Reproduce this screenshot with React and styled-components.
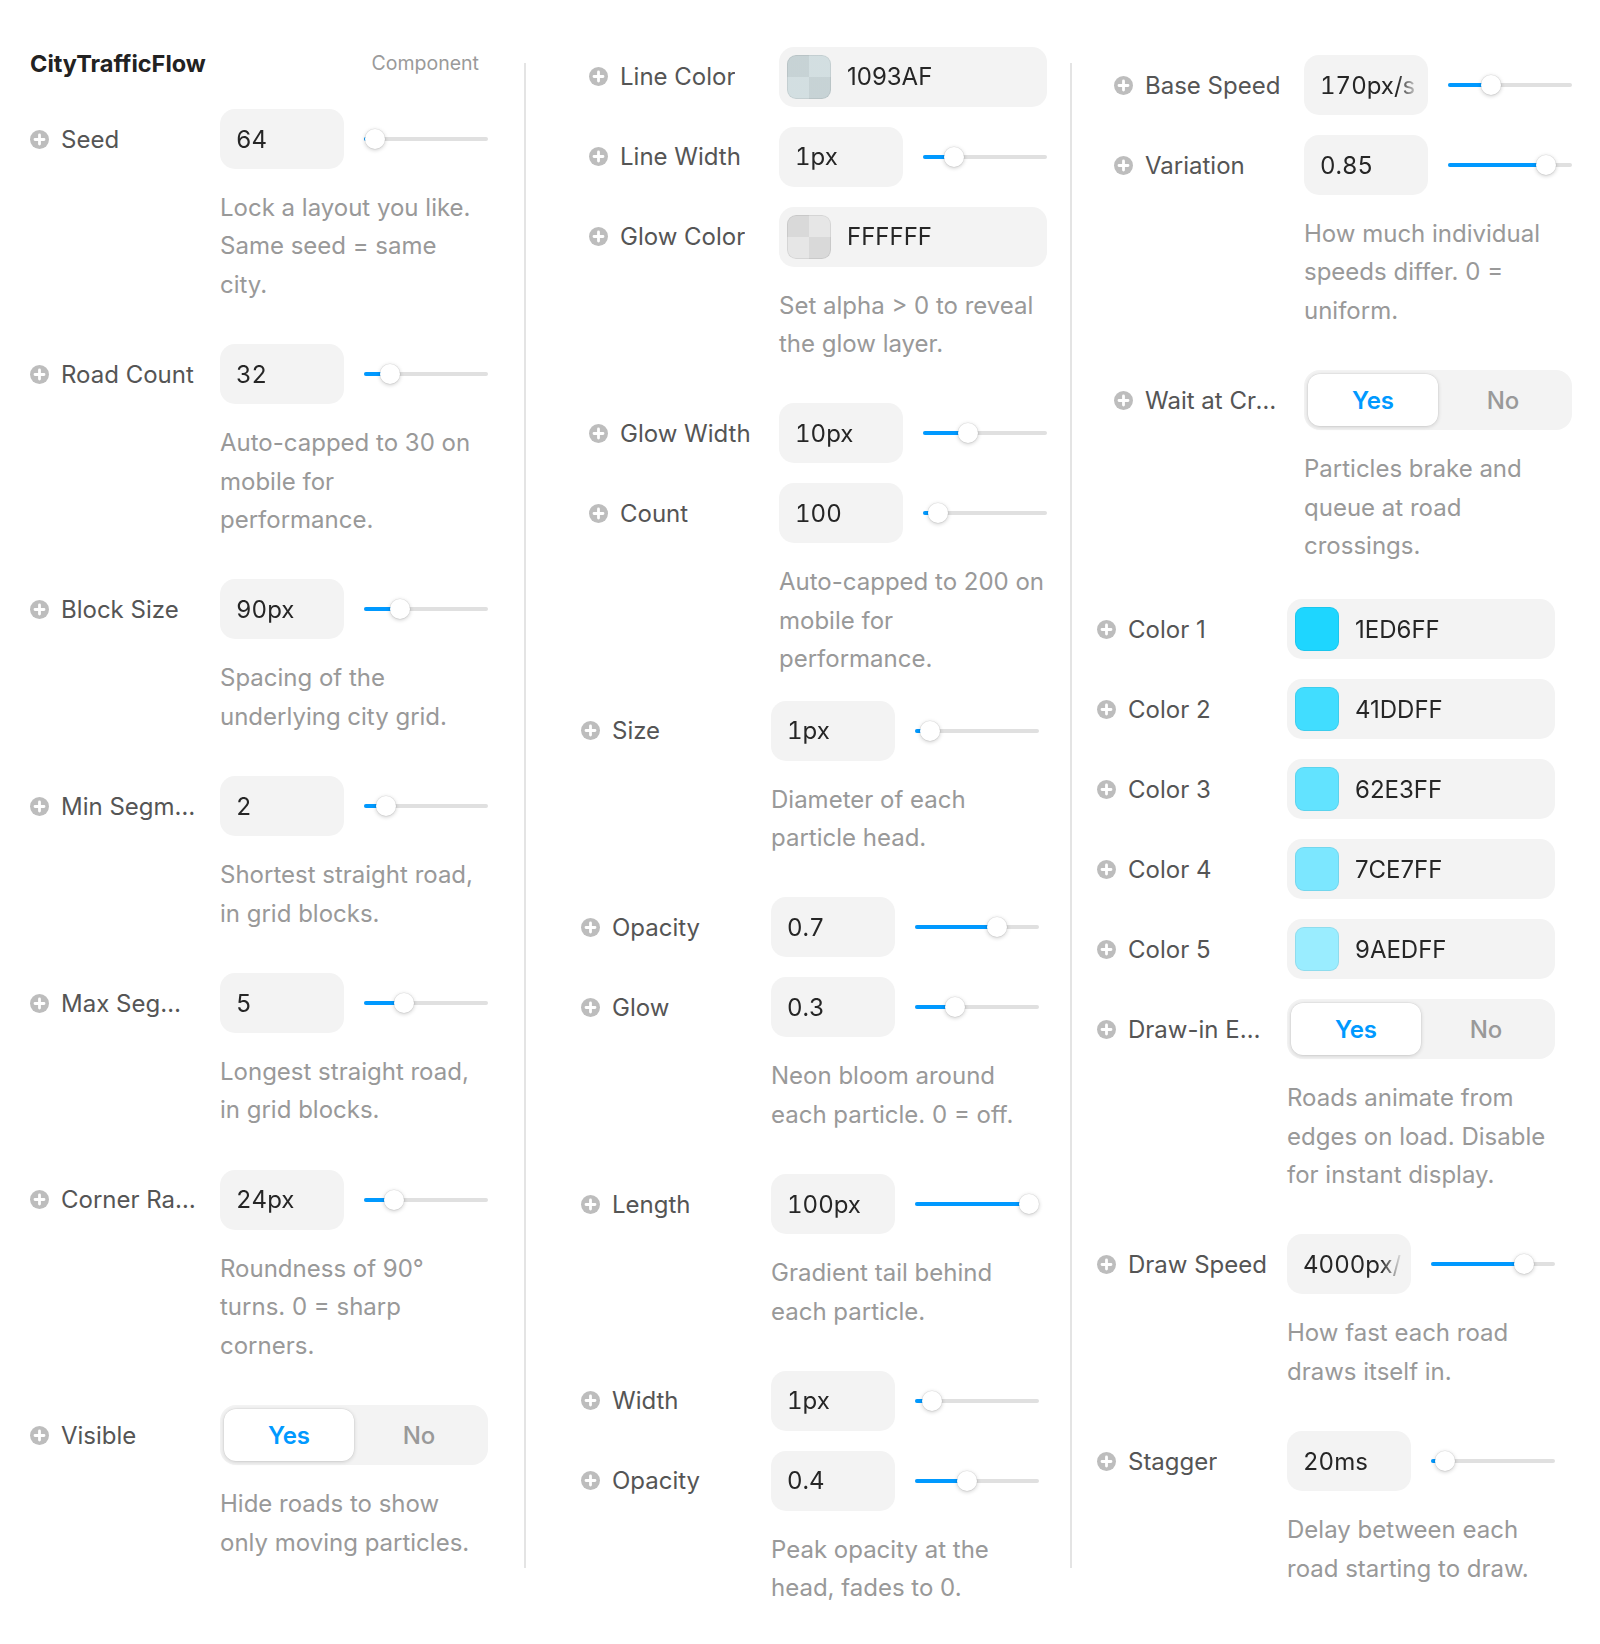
import React from 'react';
import styled, { createGlobalStyle } from 'styled-components';

const GlobalStyle = createGlobalStyle`
  html, body { margin: 0; padding: 0; background: #ffffff; }
  body {
    font-family: Inter, "Noto Sans", "Liberation Sans", sans-serif;
    -webkit-font-smoothing: antialiased;
  }
  *, *::before, *::after { box-sizing: border-box; }
`;

const Page = styled.div`
  display: flex;
  align-items: flex-start;
  width: 1600px;
  min-height: 1644px;
  padding-left: 30px;
`;

const Column = styled.div`
  flex: 0 0 ${(p) => p.$w}px;
  display: flex;
  flex-direction: column;
  padding-top: ${(p) => p.$top}px;
`;

const Divider = styled.div`
  flex: 0 0 2px;
  height: 1505px;
  margin-top: 63px;
  background: #e4e4e4;
`;

const Header = styled.div`
  width: 458px;
  height: 46px;
  margin-bottom: 23px;
  padding-right: 9px;
  display: flex;
  align-items: center;
  justify-content: space-between;
`;

const Title = styled.div`
  font-size: 23.5px;
  font-weight: 700;
  color: #222222;
`;

const Kind = styled.div`
  font-size: 19.5px;
  color: #9a9a9a;
`;

const Group = styled.div`
  width: 458px;
  display: flex;
  flex-direction: column;
  gap: 20px;
  margin-left: ${(p) => p.$indent || 0}px;
  margin-top: ${(p) => p.$gapTop || 0}px;
`;

const Row = styled.div`
  display: flex;
  align-items: center;
  height: 60px;
`;

const Label = styled.div`
  flex: 0 0 190px;
  display: flex;
  align-items: center;
  gap: 12px;
  min-width: 0;
`;

const LabelText = styled.span`
  max-width: 140px;
  overflow: hidden;
  white-space: nowrap;
  text-overflow: ellipsis;
  font-size: 24px;
  font-weight: 400;
  color: #555555;
`;

const Controls = styled.div`
  flex: 1;
  display: grid;
  grid-template-columns: 1fr 1fr;
  column-gap: 20px;
  align-items: center;
  height: 60px;
`;

const NumberBox = styled.div`
  height: 60px;
  background: #f3f3f3;
  border-radius: 15px;
  padding: 0 8px 0 16px;
  display: flex;
  align-items: center;
  overflow: hidden;
`;

const ValueText = styled.span`
  display: block;
  width: 100%;
  overflow: hidden;
  white-space: nowrap;
  font-size: 24px;
  color: #262626;
  font-variant-numeric: ${(p) => (p.$tabular ? 'tabular-nums' : 'normal')};
  -webkit-mask-image: linear-gradient(to right, #000 calc(100% - 22px), transparent);
  mask-image: linear-gradient(to right, #000 calc(100% - 22px), transparent);
`;

const Track = styled.div`
  position: relative;
  height: 4px;
  border-radius: 2px;
  background: #e0e0e0;
`;

const Fill = styled.div`
  position: absolute;
  left: 0;
  top: 0;
  bottom: 0;
  border-radius: 2px;
  background: #0099ff;
`;

const Thumb = styled.div`
  position: absolute;
  top: 50%;
  width: 20px;
  height: 20px;
  margin: -10px 0 0 -10px;
  border-radius: 50%;
  background: #ffffff;
  box-shadow: 0 1px 4px rgba(0, 0, 0, 0.22), 0 0 0 0.5px rgba(0, 0, 0, 0.08);
`;

const ColorBox = styled.div`
  grid-column: 1 / span 2;
  height: 60px;
  background: #f3f3f3;
  border-radius: 15px;
  padding: 0 8px;
  display: flex;
  align-items: center;
  gap: 16px;
`;

const Swatch = styled.div`
  flex: 0 0 44px;
  height: 44px;
  border-radius: 9px;
  background: ${(p) =>
    p.$tint
      ? `linear-gradient(${p.$tint}, ${p.$tint}), conic-gradient(#e6e6e6 0 25%, #d9d9d9 0 50%, #e6e6e6 0 75%, #d9d9d9 0)`
      : p.$color};
  box-shadow: inset 0 0 0 1px rgba(0, 0, 0, 0.07);
`;

const Toggle = styled.div`
  grid-column: 1 / span 2;
  height: 60px;
  background: #f3f3f3;
  border-radius: 16px;
  padding: 4px;
  display: grid;
  grid-template-columns: 1fr 1fr;
`;

const ToggleOption = styled.div`
  display: flex;
  align-items: center;
  justify-content: center;
  border-radius: 12px;
  font-size: 24px;
  font-weight: ${(p) => (p.$active ? 600 : 500)};
  color: ${(p) => (p.$active ? '#0099ff' : '#999999')};
  background: ${(p) => (p.$active ? '#ffffff' : 'transparent')};
  box-shadow: ${(p) =>
    p.$active ? '0 1px 4px rgba(0, 0, 0, 0.16), 0 0 0 0.5px rgba(0, 0, 0, 0.06)' : 'none'};
`;

const Desc = styled.div`
  margin-left: 190px;
  width: 266px;
  padding-bottom: 20px;
  font-size: 24px;
  line-height: 38.4px;
  color: #999999;
`;

const PlusIcon = () => (
  <svg width="19" height="19" viewBox="0 0 19 19" aria-hidden="true">
    <circle cx="9.5" cy="9.5" r="9.5" fill="#bdbdbd" />
    <path d="M9.5 5v9M5 9.5h9" stroke="#ffffff" strokeWidth="2.8" strokeLinecap="round" />
  </svg>
);

const Slider = ({ f }) => {
  const pos = `calc(10px + ${f} * (100% - 20px))`;
  return (
    <Track>
      <Fill style={{ width: pos }} />
      <Thumb style={{ left: pos }} />
    </Track>
  );
};

const Control = ({ item }) => {
  if (item.type === 'color') {
    return (
      <ColorBox>
        <Swatch $color={item.swatch} $tint={item.tint} />
        <ValueText>{item.value}</ValueText>
      </ColorBox>
    );
  }
  if (item.type === 'toggle') {
    return (
      <Toggle>
        <ToggleOption $active={item.on}>Yes</ToggleOption>
        <ToggleOption $active={!item.on}>No</ToggleOption>
      </Toggle>
    );
  }
  return (
    <>
      <NumberBox>
        <ValueText $tabular>{item.value}</ValueText>
      </NumberBox>
      <Slider f={item.f} />
    </>
  );
};

const Field = ({ item }) => (
  <>
    <Row>
      <Label>
        <PlusIcon />
        <LabelText>{item.label}</LabelText>
      </Label>
      <Controls>
        <Control item={item} />
      </Controls>
    </Row>
    {item.desc && <Desc>{item.desc}</Desc>}
  </>
);

const col1 = [
  { label: 'Seed', value: '64', f: 0.01, desc: 'Lock a layout you like. Same seed = same city.' },
  { label: 'Road Count', value: '32', f: 0.154, desc: 'Auto-capped to 30 on mobile for performance.' },
  { label: 'Block Size', value: '90px', f: 0.25, desc: 'Spacing of the underlying city grid.' },
  { label: 'Min Segments', value: '2', f: 0.113, desc: 'Shortest straight road, in grid blocks.' },
  { label: 'Max Segments', value: '5', f: 0.286, desc: 'Longest straight road, in grid blocks.' },
  { label: 'Corner Radius', value: '24px', f: 0.194, desc: 'Roundness of 90° turns. 0 = sharp corners.' },
  { type: 'toggle', label: 'Visible', on: true, desc: 'Hide roads to show only moving particles.' },
];

const col2a = [
  { type: 'color', label: 'Line Color', value: '1093AF', tint: 'rgba(16, 147, 175, 0.09)' },
  { label: 'Line Width', value: '1px', f: 0.2 },
  {
    type: 'color',
    label: 'Glow Color',
    value: 'FFFFFF',
    tint: 'rgba(255, 255, 255, 0)',
    desc: 'Set alpha > 0 to reveal the glow layer.',
  },
  { label: 'Glow Width', value: '10px', f: 0.334 },
  { label: 'Count', value: '100', f: 0.045, desc: 'Auto-capped to 200 on mobile for performance.' },
];

const col2b = [
  { label: 'Size', value: '1px', f: 0.046, desc: 'Diameter of each particle head.' },
  { label: 'Opacity', value: '0.7', f: 0.694 },
  { label: 'Glow', value: '0.3', f: 0.29, desc: 'Neon bloom around each particle. 0 = off.' },
  { label: 'Length', value: '100px', f: 1, desc: 'Gradient tail behind each particle.' },
  { label: 'Width', value: '1px', f: 0.065 },
  { label: 'Opacity', value: '0.4', f: 0.404, desc: 'Peak opacity at the head, fades to 0.' },
];

const col3a = [
  { label: 'Base Speed', value: '170px/s', f: 0.322 },
  { label: 'Variation', value: '0.85', f: 0.848, desc: 'How much individual speeds differ. 0 = uniform.' },
  {
    type: 'toggle',
    label: 'Wait at Crossings',
    on: true,
    desc: 'Particles brake and queue at road crossings.',
  },
];

const col3b = [
  { type: 'color', label: 'Color 1', value: '1ED6FF', swatch: '#1ED6FF' },
  { type: 'color', label: 'Color 2', value: '41DDFF', swatch: '#41DDFF' },
  { type: 'color', label: 'Color 3', value: '62E3FF', swatch: '#62E3FF' },
  { type: 'color', label: 'Color 4', value: '7CE7FF', swatch: '#7CE7FF' },
  { type: 'color', label: 'Color 5', value: '9AEDFF', swatch: '#9AEDFF' },
  {
    type: 'toggle',
    label: 'Draw-in Effect',
    on: true,
    desc: 'Roads animate from edges on load. Disable for instant display.',
  },
  { label: 'Draw Speed', value: '4000px/s', f: 0.796, desc: 'How fast each road draws itself in.' },
  { label: 'Stagger', value: '20ms', f: 0.035, desc: 'Delay between each road starting to draw.' },
];

const renderItems = (items) => items.map((item, i) => <Field key={i} item={item} />);

export default function App() {
  return (
    <>
      <GlobalStyle />
      <Page>
        <Column $w={494} $top={40}>
          <Header>
            <Title>CityTrafficFlow</Title>
            <Kind>Component</Kind>
          </Header>
          <Group>{renderItems(col1)}</Group>
        </Column>
        <Divider />
        <Column $w={544} $top={46.5}>
          <Group $indent={63}>{renderItems(col2a)}</Group>
          <Group $indent={55} $gapTop={2}>
            {renderItems(col2b)}
          </Group>
        </Column>
        <Divider />
        <Column $w={526} $top={55}>
          <Group $indent={42}>{renderItems(col3a)}</Group>
          <Group $indent={25} $gapTop={13.7}>
            {renderItems(col3b)}
          </Group>
        </Column>
      </Page>
    </>
  );
}
